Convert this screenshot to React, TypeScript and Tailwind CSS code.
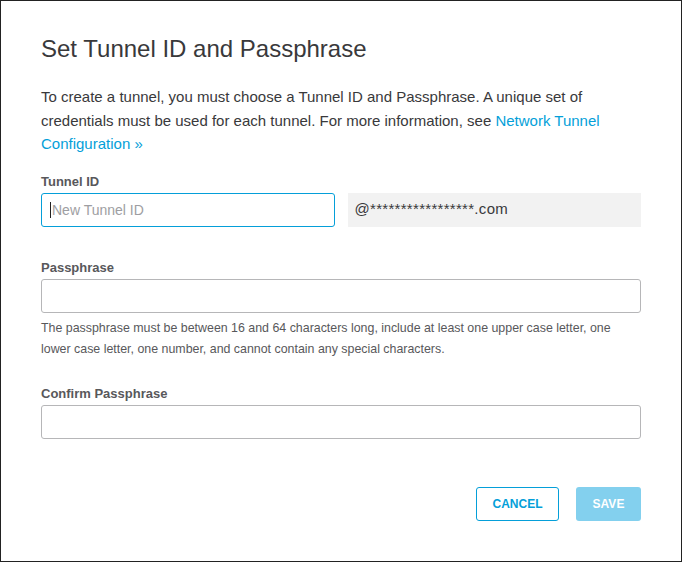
import React from "react";

const font = { fontFamily: '"Liberation Sans", Arial, sans-serif' };

function Field({ label, children }: { label: string; children: React.ReactNode }) {
    return (
        <div>
            <label className="block text-[13px] font-bold text-[#58585b] leading-4 mb-[3px]">{label}</label>
            {children}
        </div>
    );
}

export default function App() {
    return (
        <div className="w-[682px] h-[562px] bg-white border border-[#222] text-[#39393b]" style={font}>
            <div className="px-10 pt-[34px]">
                <h1 className="text-[24px] font-normal leading-7 text-[#39393b]">Set Tunnel ID and Passphrase</h1>

                <p className="mt-[22px] text-[15px] leading-[23.5px] pr-6">
                    To create a tunnel, you must choose a Tunnel ID and Passphrase. A unique set of credentials must be
                    used for each tunnel. For more information, see{" "}
                    <a href="#" className="text-[#049fd9]">
                        Network Tunnel Configuration »
                    </a>
                </p>

                <div className="mt-[18px]">
                    <Field label="Tunnel ID">
                        <div className="grid grid-cols-2 gap-[13px]">
                            <div className="relative">
                                <input
                                    className="w-full h-[34px] border border-[#049fd9] rounded-[3px] pl-[10px] pr-2 text-[14px] outline-none placeholder:text-[#9e9ea2]"
                                    placeholder="New Tunnel ID"
                                />
                                <span className="absolute left-[9px] top-[9px] w-px h-4 bg-[#222]" />
                            </div>
                            <div className="h-[34px] bg-[#f2f2f2] flex items-center px-[7px] text-[15px] tracking-[0.3px] text-[#39393b]">
                                @*****************.com
                            </div>
                        </div>
                    </Field>
                </div>

                <div className="mt-[33px]">
                    <Field label="Passphrase">
                        <input className="w-full h-[34px] border border-[#b6b6b8] rounded-[3px] px-2 text-[14px] outline-none" />
                    </Field>
                    <p className="mt-[5px] text-[12.4px] leading-[21px] text-[#58585b]">
                        The passphrase must be between 16 and 64 characters long, include at least one upper case letter, one
                        lower case letter, one number, and cannot contain any special characters.
                    </p>
                </div>

                <div className="mt-[26px]">
                    <Field label="Confirm Passphrase">
                        <input className="w-full h-[34px] border border-[#b6b6b8] rounded-[3px] px-2 text-[14px] outline-none" />
                    </Field>
                </div>

                <div className="mt-[48px] flex justify-end gap-[17px]">
                    <button className="h-[34px] w-[83px] border border-[#049fd9] rounded-[3px] text-[#049fd9] text-[12px] font-bold">
                        CANCEL
                    </button>
                    <button className="h-[34px] w-[65px] bg-[#83d0ee] rounded-[3px] text-white text-[12px] font-bold">
                        SAVE
                    </button>
                </div>
            </div>
        </div>
    );
}
